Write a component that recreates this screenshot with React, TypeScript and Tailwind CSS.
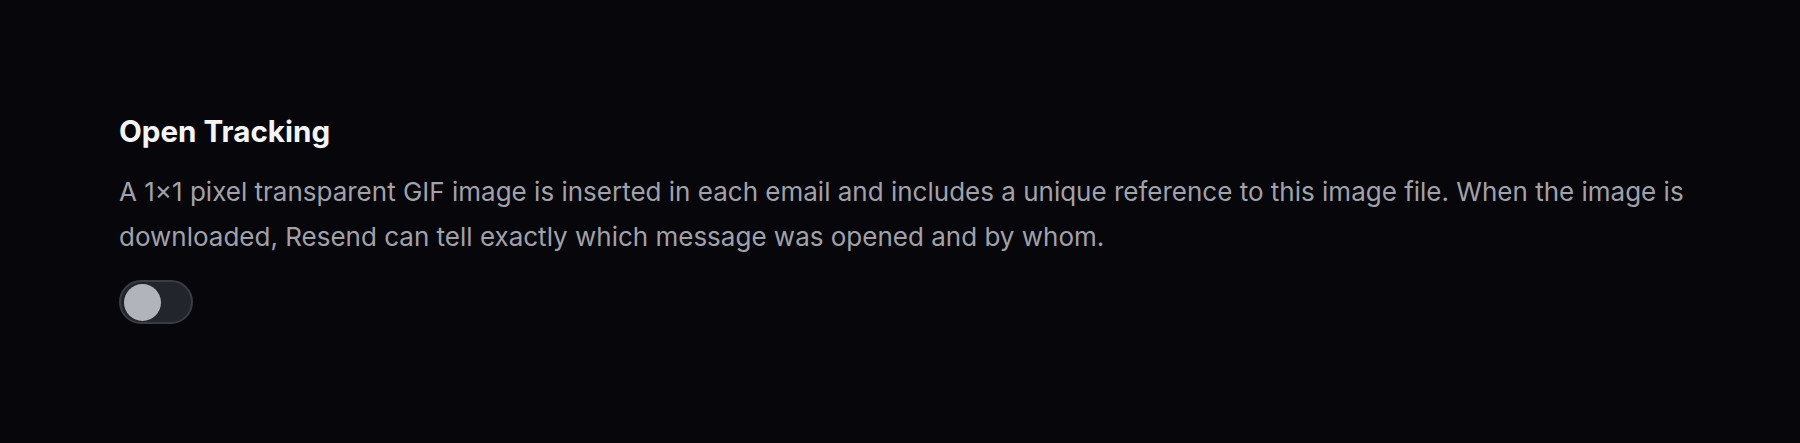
import { useState } from 'react'

export default function App() {
  const [enabled, setEnabled] = useState(false)

  return (
    <div className="min-h-screen w-full bg-[#07060b] font-['Inter','Noto_Sans',sans-serif]">
      <section className="pl-[119px] pr-[80px] pt-[113px]">
        {/* Heading */}
        <h2 className="text-[29.6px] leading-[36px] font-bold text-[#f4f4f5]">Open Tracking</h2>

        {/* Description */}
        <p className="mt-[20px] text-[26px] leading-[45px] text-[#a1a1aa]">
          A 1×1 pixel transparent GIF image is inserted in each email and includes a unique reference to this image file. When the image is downloaded, Resend can tell exactly which message was opened and by whom.
        </p>

        {/* Toggle */}
        <button
          type="button"
          role="switch"
          aria-checked={enabled}
          onClick={() => setEnabled(!enabled)}
          className="mt-[21px] flex h-[44px] w-[74px] items-center rounded-full border-2 border-[#3a3c43] bg-[#23252c] px-[3px]"
        >
          <span
            className={
              enabled
                ? 'block h-[37px] w-[37px] translate-x-[30px] rounded-full bg-[#b1b4bb] transition-transform'
                : 'block h-[37px] w-[37px] rounded-full bg-[#b1b4bb] transition-transform'
            }
          />
        </button>
      </section>
    </div>
  )
}
